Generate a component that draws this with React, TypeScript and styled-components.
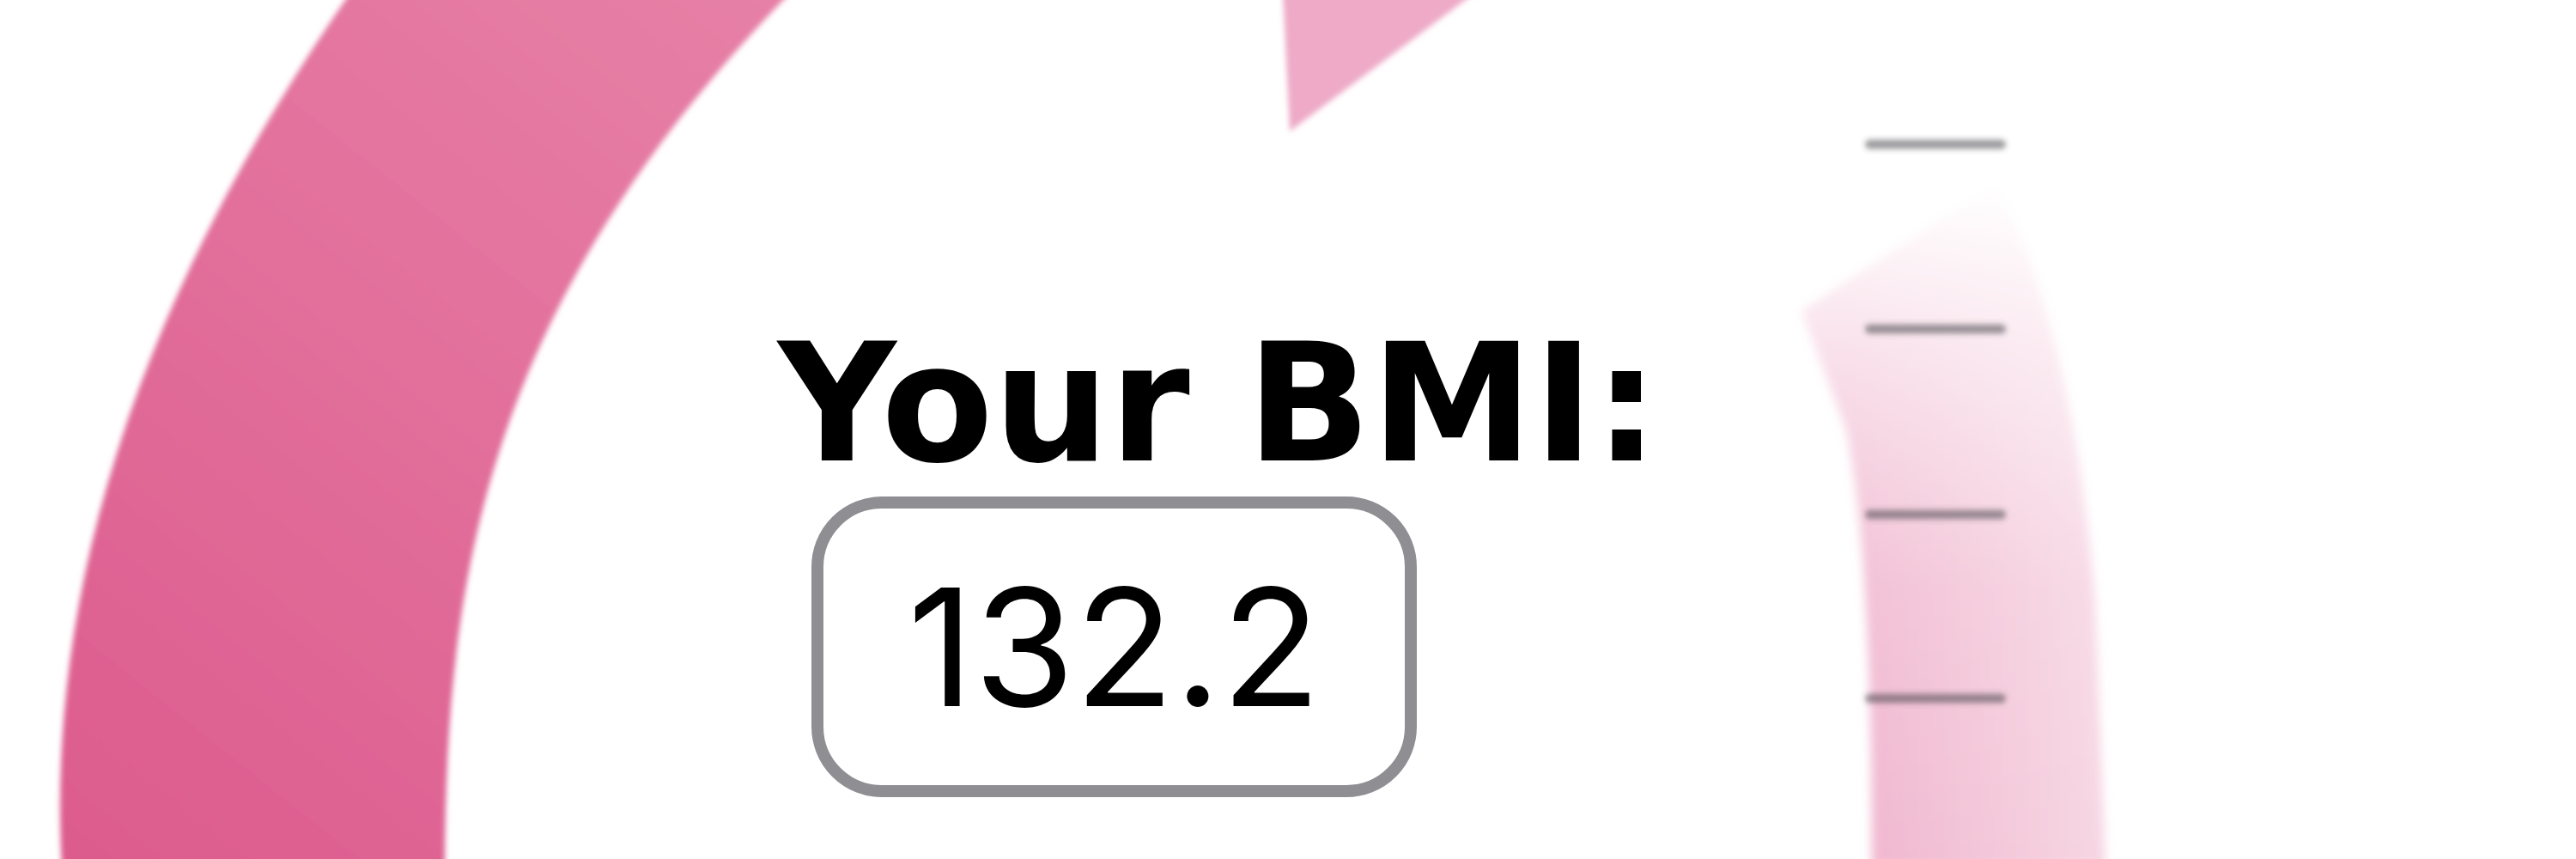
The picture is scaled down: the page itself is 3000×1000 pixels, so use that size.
import React from "react";
import styled, { createGlobalStyle } from "styled-components";

const GlobalStyle = createGlobalStyle`
  html, body {
    margin: 0;
    padding: 0;
    background: #ffffff;
  }
`;

const Stage = styled.main`
  display: grid;
  width: 3000px;
  height: 1000px;
  overflow: hidden;
  background: #ffffff;

  & > * {
    grid-area: 1 / 1;
  }
`;

const Backdrop = styled.svg`
  display: block;
  width: 3000px;
  height: 1000px;
`;

const Result = styled.section`
  display: flex;
  flex-direction: column;
  align-items: flex-start;
  padding: 376px 0 0 906px;
  gap: 12px;
`;

const Title = styled.h1`
  margin: 0;
  font-family: "DejaVu Sans", Verdana, sans-serif;
  font-weight: 700;
  font-size: 190px;
  line-height: 1;
  color: #000000;
`;

const ValueBox = styled.div`
  box-sizing: border-box;
  display: flex;
  align-items: center;
  justify-content: center;
  width: 705px;
  height: 350px;
  margin-left: 39px;
  border: 14px solid #8e8e93;
  border-radius: 82px;
  background: #ffffff;
`;

const Value = styled.span`
  font-family: Inter, "Liberation Sans", Arial, sans-serif;
  font-weight: 400;
  font-size: 190px;
  line-height: 1;
  color: #000000;
`;

const ticks = [168, 383, 599, 813];

const Gauge = () => (
  <Backdrop viewBox="0 0 3000 1000" aria-hidden="true">
    <defs>
      <linearGradient id="ring" gradientUnits="userSpaceOnUse" x1="900" y1="0" x2="100" y2="1000">
        <stop offset="0" stopColor="#e680a6" />
        <stop offset="1" stopColor="#dd5c8e" />
      </linearGradient>
      <linearGradient id="bandTint" gradientUnits="userSpaceOnUse" x1="2150" y1="0" x2="2450" y2="0">
        <stop offset="0" stopColor="#f0b4cd" />
        <stop offset="1" stopColor="#f6d6e3" />
      </linearGradient>
      <linearGradient id="bandFade" gradientUnits="userSpaceOnUse" x1="0" y1="210" x2="0" y2="1000">
        <stop offset="0" stopColor="#ffffff" stopOpacity="0" />
        <stop offset="0.25" stopColor="#ffffff" stopOpacity="0.4" />
        <stop offset="0.6" stopColor="#ffffff" stopOpacity="0.85" />
        <stop offset="1" stopColor="#ffffff" stopOpacity="1" />
      </linearGradient>
      <mask id="bandMask" maskUnits="userSpaceOnUse" x="0" y="0" width="3000" height="1000">
        <rect x="0" y="0" width="3000" height="1000" fill="url(#bandFade)" />
      </mask>
      <filter id="soft" filterUnits="userSpaceOnUse" x="0" y="-50" width="3000" height="1100">
        <feGaussianBlur stdDeviation="3" />
      </filter>
      <filter id="softer" filterUnits="userSpaceOnUse" x="0" y="-50" width="3000" height="1100">
        <feGaussianBlur stdDeviation="6" />
      </filter>
    </defs>

    <path
      d="M 409 -10 C 215 270, 50 620, 72 1010 L 518 1010 C 520 680, 560 360, 922 -10 Z"
      fill="url(#ring)"
      filter="url(#soft)"
    />

    <path d="M 1494 -10 L 1502 153 L 1720 -10 Z" fill="#eeaac7" filter="url(#soft)" />

    <g mask="url(#bandMask)">
      <path
        d="M 2098 362 L 2325 212 C 2370 300, 2420 450, 2440 700 L 2452 1010 L 2180 1010 C 2180 800, 2174 620, 2150 500 Z"
        fill="url(#bandTint)"
        filter="url(#softer)"
      />
    </g>

    <g filter="url(#soft)">
      {ticks.map((y) => (
        <rect
          key={y}
          x="2172"
          y={y - 5.5}
          width="164"
          height="11"
          rx="5.5"
          fill="rgba(62, 62, 66, 0.5)"
        />
      ))}
    </g>
  </Backdrop>
);

export default function App() {
  return (
    <>
      <GlobalStyle />
      <Stage>
        <Gauge />
        <Result>
          <Title>Your BMI:</Title>
          <ValueBox>
            <Value>132.2</Value>
          </ValueBox>
        </Result>
      </Stage>
    </>
  );
}
